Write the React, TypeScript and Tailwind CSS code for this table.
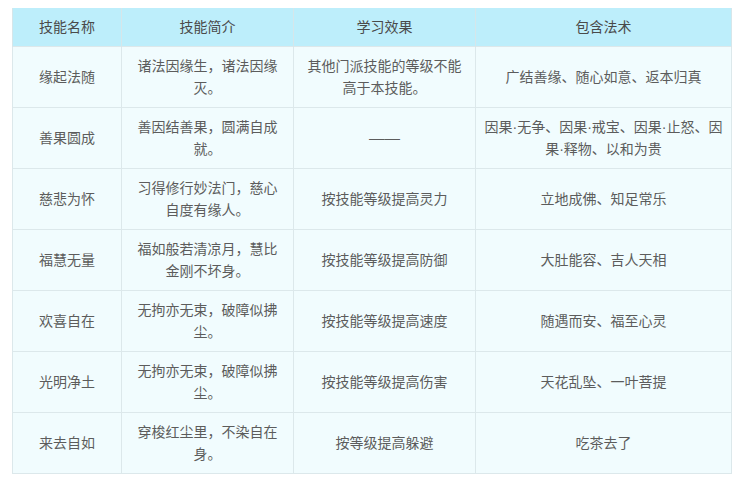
import React from "react";

const rows: [string, string, string, string][] = [
  ["缘起法随", "诸法因缘生，诸法因缘灭。", "其他门派技能的等级不能高于本技能。", "广结善缘、随心如意、返本归真"],
  ["善果圆成", "善因结善果，圆满自成就。", "——", "因果·无争、因果·戒宝、因果·止怒、因果·释物、以和为贵"],
  ["慈悲为怀", "习得修行妙法门，慈心自度有缘人。", "按技能等级提高灵力", "立地成佛、知足常乐"],
  ["福慧无量", "福如般若清凉月，慧比金刚不坏身。", "按技能等级提高防御", "大肚能容、吉人天相"],
  ["欢喜自在", "无拘亦无束，破障似拂尘。", "按技能等级提高速度", "随遇而安、福至心灵"],
  ["光明净土", "无拘亦无束，破障似拂尘。", "按技能等级提高伤害", "天花乱坠、一叶菩提"],
  ["来去自如", "穿梭红尘里，不染自在身。", "按等级提高躲避", "吃茶去了"],
];

const pad = ["px-[10px]", "px-[10px]", "px-[10px]", "px-[6px]"];

export default function App() {
  return (
    <div
      className="w-[741px] h-[482px] bg-white pt-[8px] pl-[12px]"
      style={{ fontFamily: '"Liberation Sans", "Noto Sans CJK SC", sans-serif' }}
    >
      <table className="table-fixed border-collapse w-[719px] text-[14px] leading-[22px] text-[#5c5c5c]">
        <colgroup>
          <col className="w-[109px]" />
          <col className="w-[172px]" />
          <col className="w-[182px]" />
          <col className="w-[256px]" />
        </colgroup>
        <thead>
          <tr className="h-[38px] bg-[#bdeefb]">
            {["技能名称", "技能简介", "学习效果", "包含法术"].map((h) => (
              <th key={h} className="font-normal text-center px-[10px] border-x border-[#d6e6ea] text-[#4a4a4a]">
                {h}
              </th>
            ))}
          </tr>
        </thead>
        <tbody>
          {rows.map((r) => (
            <tr key={r[0]} className="h-[61px] bg-[#f1fcfe]">
              {r.map((c, i) => (
                <td key={i} className={`border border-[#dce8eb] text-center align-middle py-[7px] ${pad[i]}`}>
                  {c === "——" ? <span className="text-[15.5px]">{c}</span> : c}
                </td>
              ))}
            </tr>
          ))}
        </tbody>
      </table>
    </div>
  );
}
